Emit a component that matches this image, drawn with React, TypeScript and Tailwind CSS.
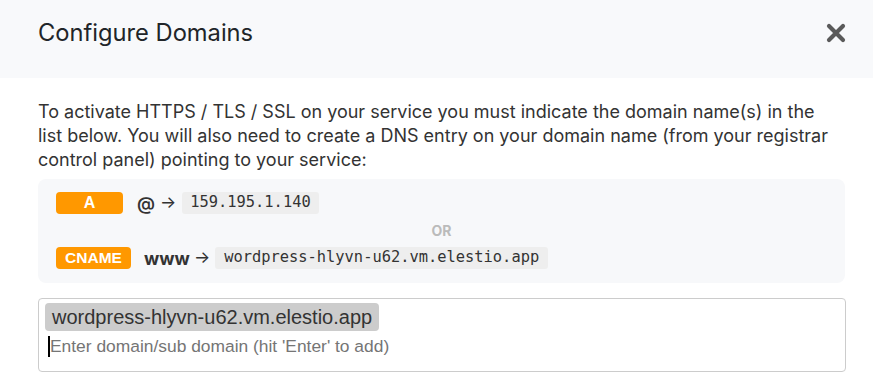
import React from "react";

export default function App() {
  return (
    <div className="w-[873px] h-[380px] bg-white overflow-hidden" style={{ fontFamily: "Inter, 'Noto Sans', sans-serif" }}>
      <div className="h-[78px] bg-[#f8f9fb] flex items-start justify-between pl-[38px] pr-[26px] pt-[18px]">
        <div className="text-[23.7px] leading-[30px] text-[#212529]">Configure Domains</div>
        <button className="w-[22px] h-[30px] flex items-center justify-center text-[#555]">
          <svg width="22" height="22" viewBox="0 0 22 22">
            <path d="M4 4 L18 18 M18 4 L4 18" stroke="#5a5a5a" strokeWidth="4.2" strokeLinecap="round" />
          </svg>
        </button>
      </div>
      <div className="px-[38px] pt-[22px]">
        <p className="text-[18px] leading-[24px] text-[#333]">
          To activate HTTPS / TLS / SSL on your service you must indicate the domain name(s) in the list below. You will also need to create a DNS entry on your domain name (from your registrar control panel) pointing to your service:
        </p>
        <div className="mt-[7px] w-[807px] h-[104px] bg-[#f7f8fa] rounded-[8px] px-[18px] pt-[12px]">
          <div className="flex items-center h-[24px]">
            <span className="w-[67px] h-[22px] rounded-[4px] bg-[#ff9800] text-white flex items-center justify-center text-[16px] font-bold" style={{ fontFamily: "'Liberation Sans', Arial, sans-serif" }}>A</span>
            <span className="ml-[14px] text-[18px] font-semibold text-[#333]">@</span>
            <span className="ml-[5px] text-[17px] text-[#333]">→</span>
            <span className="ml-[6px] h-[22px] px-[8px] rounded-[3px] bg-[#eeeeee] flex items-center text-[15.4px] text-[#333]" style={{ fontFamily: "'DejaVu Sans Mono', monospace" }}>159.195.1.140</span>
          </div>
          <div className="h-[31px] flex items-center justify-center text-[14px] font-bold text-[#bbbbbb]">OR</div>
          <div className="flex items-center h-[24px]">
            <span className="w-[75px] h-[22px] rounded-[4px] bg-[#ff9800] text-white flex items-center justify-center text-[15.5px] font-bold" style={{ fontFamily: "'Liberation Sans', Arial, sans-serif" }}>CNAME</span>
            <span className="ml-[13px] text-[18px] font-bold text-[#333]">www</span>
            <span className="ml-[4px] text-[17px] text-[#333]">→</span>
            <span className="ml-[5px] h-[22px] px-[9px] rounded-[3px] bg-[#eeeeee] flex items-center text-[15.4px] text-[#333]" style={{ fontFamily: "'DejaVu Sans Mono', monospace" }}>wordpress-hlyvn-u62.vm.elestio.app</span>
          </div>
        </div>
        <div className="mt-[15px] w-[808px] h-[74px] border border-[#cccccc] rounded-[4px] px-[6px] pt-[4px]" style={{ fontFamily: "'Liberation Sans', Arial, sans-serif" }}>
          <div className="inline-flex h-[28px] items-center px-[7px] rounded-[4px] bg-[#cccccc] text-[20px] text-[#333]">wordpress-hlyvn-u62.vm.elestio.app</div>
          <div className="flex items-center h-[24px] mt-[3px] pl-[3px]">
            <span className="w-[2px] h-[21px] bg-black"></span>
            <span className="text-[17.4px] text-[#757575]">Enter domain/sub domain (hit 'Enter' to add)</span>
          </div>
        </div>
      </div>
    </div>
  );
}
